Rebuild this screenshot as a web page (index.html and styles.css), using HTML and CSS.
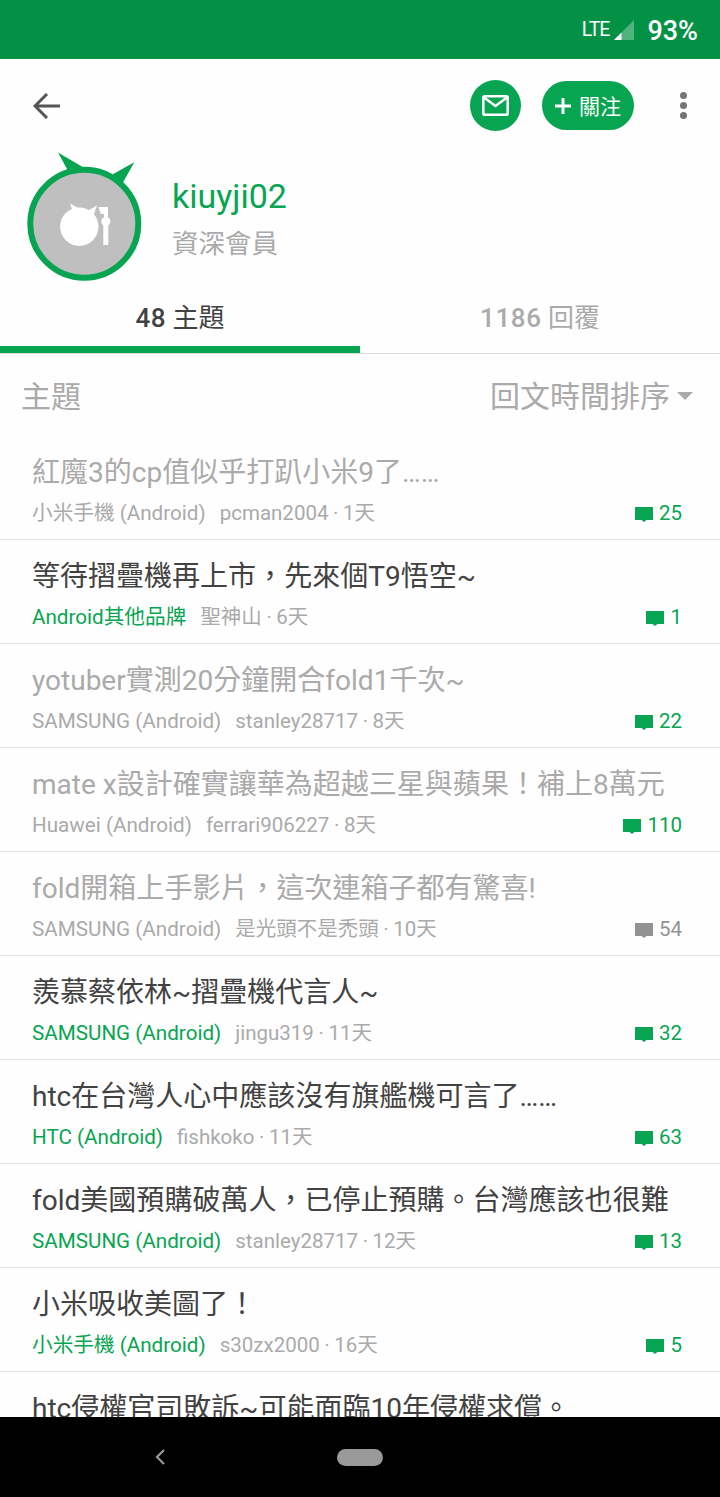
FILE: index.html
```html
<!DOCTYPE html>
<html lang="zh-Hant">

<head>
    <meta charset="UTF-8" />
    <meta name="viewport" content="width=device-width, initial-scale=1.0" />
    <title>kiuyji02</title>
    <link rel="stylesheet" href="styles.css">
</head>

<body>
    <svg class="symbols">
        <symbol id="bubble" viewBox="0 0 18 15">
            <path d="M0 0h18v13h-6.500L9 15l-2.500-2H0z" />
        </symbol>
    </svg>

    <div class="status-bar">
        <span class="network">LTE</span>
        <svg class="signal" viewBox="0 0 20 20">
            <path d="M20 0v20H0z" fill="#fff" fill-opacity=".3" />
            <path d="M7.500 12.500V20H0z" fill="#fff" />
        </svg>
        <span class="battery">93%</span>
    </div>

    <div class="toolbar">
        <svg class="back" viewBox="0 0 27 26">
            <path d="M27 13H2M14 1L2 13l12 12" />
        </svg>
        <div class="btn-mail">
            <svg width="27" height="21" viewBox="0 0 27 21">
                <rect x="1.300" y="1.300" width="24.400" height="18.400" rx="1.500" />
                <path d="M2 2.500l11.500 8.500L25 2.500" />
            </svg>
        </div>
        <div class="btn-follow">
            <svg width="16" height="16" viewBox="0 0 16 16">
                <path d="M8 0v16M0 8h16" />
            </svg>
            <span>關注</span>
        </div>
        <div class="more"><i></i><i></i><i></i></div>
    </div>

    <div class="profile">
        <svg class="avatar" viewBox="0 0 116 130">
            <path d="M32 .5l25.500 15-7 6-9-3.500z M108.300 10.300l-11.600 20.700-10-8.700z" fill="#07a552" />
            <circle cx="58.300" cy="71.700" r="54" fill="#bfbfbf" stroke="#07a552" stroke-width="6" />
            <g fill="#fff">
                <circle cx="53.300" cy="74.700" r="19.200" />
                <path d="M44 51.500l9 5-6 3.500z M71 53.500l-3.500 10-5.500-5z" />
                <path d="M72.300 55h9.700v11h-4v-4h-3.200z" />
                <circle cx="79.800" cy="69.500" r="4.600" />
                <path d="M77.300 70h5v23h-5z" />
            </g>
        </svg>
        <div class="profile-info">
            <div class="name">kiuyji02</div>
            <div class="level">資深會員</div>
        </div>
    </div>

    <div class="tabs">
        <div class="tab active"><b>48</b> 主題</div>
        <div class="tab"><b>1186</b> 回覆</div>
    </div>

    <div class="list-header">
        <span>主題</span>
        <span class="sort">回文時間排序</span>
    </div>

    <div class="topics">
        <div class="topic read">
            <div class="title">紅魔3的cp值似乎打趴小米9了……</div>
            <div class="meta">
                <span class="board">小米手機 (Android)</span>
                <span class="author">pcman2004 · 1天</span>
                <span class="count"><svg><use href="#bubble" /></svg>25</span>
            </div>
        </div>
        <div class="topic">
            <div class="title">等待摺疊機再上市，先來個T9悟空~</div>
            <div class="meta">
                <span class="board">Android其他品牌</span>
                <span class="author">聖神山 · 6天</span>
                <span class="count"><svg><use href="#bubble" /></svg>1</span>
            </div>
        </div>
        <div class="topic read">
            <div class="title">yotuber實測20分鐘開合fold1千次~</div>
            <div class="meta">
                <span class="board">SAMSUNG (Android)</span>
                <span class="author">stanley28717 · 8天</span>
                <span class="count"><svg><use href="#bubble" /></svg>22</span>
            </div>
        </div>
        <div class="topic read">
            <div class="title">mate x設計確實讓華為超越三星與蘋果！補上8萬元</div>
            <div class="meta">
                <span class="board">Huawei (Android)</span>
                <span class="author">ferrari906227 · 8天</span>
                <span class="count"><svg><use href="#bubble" /></svg>110</span>
            </div>
        </div>
        <div class="topic read">
            <div class="title">fold開箱上手影片，這次連箱子都有驚喜!</div>
            <div class="meta">
                <span class="board">SAMSUNG (Android)</span>
                <span class="author">是光頭不是禿頭 · 10天</span>
                <span class="count old"><svg><use href="#bubble" /></svg>54</span>
            </div>
        </div>
        <div class="topic">
            <div class="title">羨慕蔡依林~摺疊機代言人~</div>
            <div class="meta">
                <span class="board">SAMSUNG (Android)</span>
                <span class="author">jingu319 · 11天</span>
                <span class="count"><svg><use href="#bubble" /></svg>32</span>
            </div>
        </div>
        <div class="topic">
            <div class="title">htc在台灣人心中應該沒有旗艦機可言了……</div>
            <div class="meta">
                <span class="board">HTC (Android)</span>
                <span class="author">fishkoko · 11天</span>
                <span class="count"><svg><use href="#bubble" /></svg>63</span>
            </div>
        </div>
        <div class="topic">
            <div class="title">fold美國預購破萬人，已停止預購。台灣應該也很難</div>
            <div class="meta">
                <span class="board">SAMSUNG (Android)</span>
                <span class="author">stanley28717 · 12天</span>
                <span class="count"><svg><use href="#bubble" /></svg>13</span>
            </div>
        </div>
        <div class="topic">
            <div class="title">小米吸收美圖了！</div>
            <div class="meta">
                <span class="board">小米手機 (Android)</span>
                <span class="author">s30zx2000 · 16天</span>
                <span class="count"><svg><use href="#bubble" /></svg>5</span>
            </div>
        </div>
        <div class="topic">
            <div class="title">htc侵權官司敗訴~可能面臨10年侵權求償。</div>
        </div>
    </div>

    <div class="nav-bar">
        <svg class="nav-back" viewBox="0 0 10 16">
            <path d="M9 1L2 8l7 7" />
        </svg>
        <div class="home"></div>
    </div>
</body>

</html>
```

FILE: styles.css
```css
* {
    box-sizing: border-box;
}

body {
    margin: 0;
    height: 1497px;
    display: flex;
    flex-direction: column;
    overflow: hidden;
    background: #fefefe;
    color: #424242;
    font-family: Roboto, 'Noto Sans CJK TC', sans-serif;
}

svg {
    display: block;
    flex: none;
}

.symbols {
    display: none;
}

.status-bar {
    flex: none;
    height: 59px;
    padding: 2px 22px 0 0;
    display: flex;
    justify-content: flex-end;
    align-items: center;
    background: #039245;
    color: #fff;
}

.network {
    padding-bottom: 2px;
    font-size: 19.5px;
    letter-spacing: -1px;
}

.signal {
    width: 20px;
    height: 20px;
    margin: 0 13px 2px 5px;
}

.battery {
    font-size: 27px;
    font-weight: 500;
}

.toolbar {
    flex: none;
    height: 93px;
    padding: 0 33px;
    display: flex;
    align-items: center;
}

.back {
    width: 27px;
    height: 26px;
    margin-right: auto;
    fill: none;
    stroke: #555;
    stroke-width: 3;
}

.btn-mail,
.btn-follow {
    display: flex;
    align-items: center;
    justify-content: center;
    background: #07a552;
    color: #fff;
}

.btn-mail {
    width: 51px;
    height: 51px;
    margin-right: 21px;
    border-radius: 50%;
}

.btn-mail svg {
    fill: none;
    stroke: #fff;
    stroke-width: 2.6;
}

.btn-follow {
    width: 92px;
    height: 49px;
    gap: 8px;
    border-radius: 25px;
    font-size: 21px;
}

.btn-follow span {
    padding-bottom: 2px;
}

.btn-follow svg {
    stroke: #fff;
    stroke-width: 3;
}

.more {
    margin-left: 46px;
    display: flex;
    flex-direction: column;
    gap: 3px;
}

.more i {
    width: 7px;
    height: 7px;
    border-radius: 50%;
    background: #757575;
}

.profile {
    flex: none;
    height: 134px;
    padding-left: 26px;
    display: flex;
}

.avatar {
    width: 116px;
    height: 130px;
}

.profile-info {
    padding: 22px 0 0 30px;
}

.name {
    height: 45px;
    line-height: 44px;
    font-size: 34px;
    color: #07a552;
}

.level {
    height: 50px;
    line-height: 50px;
    font-size: 26.5px;
    color: #aaa;
}

.tabs {
    flex: none;
    height: 68px;
    display: flex;
    border-bottom: 1px solid #ddd;
}

.tab {
    flex: 1;
    line-height: 65px;
    height: 67px;
    text-align: center;
    font-size: 26px;
    color: #aaa;
}

.tab b {
    font-weight: 500;
    letter-spacing: .6px;
}

.tab.active {
    border-bottom: 7px solid #07a552;
    color: #424242;
}

.list-header {
    flex: none;
    height: 82px;
    padding: 2px 27px 0 21px;
    display: flex;
    justify-content: space-between;
    line-height: 82px;
    font-size: 30px;
    color: #aaa;
}

.sort {
    height: 82px;
    display: flex;
    align-items: center;
    gap: 7px;
}

.sort::after {
    content: '';
    margin-bottom: 3px;
    border: 8px solid transparent;
    border-top-color: #aaa;
    border-bottom: 0;
}

.topics {
    flex: 1;
    min-height: 0;
    overflow: hidden;
}

.topic {
    height: 104px;
    padding: 16px 38px 0 32px;
    border-bottom: 1px solid #e3e3e3;
}

.title {
    height: 42px;
    line-height: 42px;
    font-size: 28.03px;
    white-space: nowrap;
}

.meta {
    height: 38px;
    line-height: 38px;
    display: flex;
    font-size: 20.5px;
}

.board {
    margin-right: 14px;
    font-size: 20.65px;
    color: #07a552;
}

.author {
    color: #aaa;
    word-spacing: -.5px;
}

.read .title,
.read .board {
    color: #aaa;
}

.count {
    margin-left: auto;
    display: flex;
    align-items: center;
    gap: 6px;
    color: #07a552;
}

.count svg {
    width: 18px;
    height: 15px;
    margin-top: 3px;
    fill: currentColor;
}

.count.old {
    color: #929292;
}

.nav-bar {
    flex: none;
    height: 80px;
    display: flex;
    align-items: center;
    background: #000;
}

.nav-back {
    width: 10px;
    height: 16px;
    margin: 0 172px 0 155px;
    fill: none;
    stroke: #999;
    stroke-width: 2.2;
}

.home {
    width: 46px;
    height: 17px;
    border-radius: 9px;
    background: #999;
}
```
